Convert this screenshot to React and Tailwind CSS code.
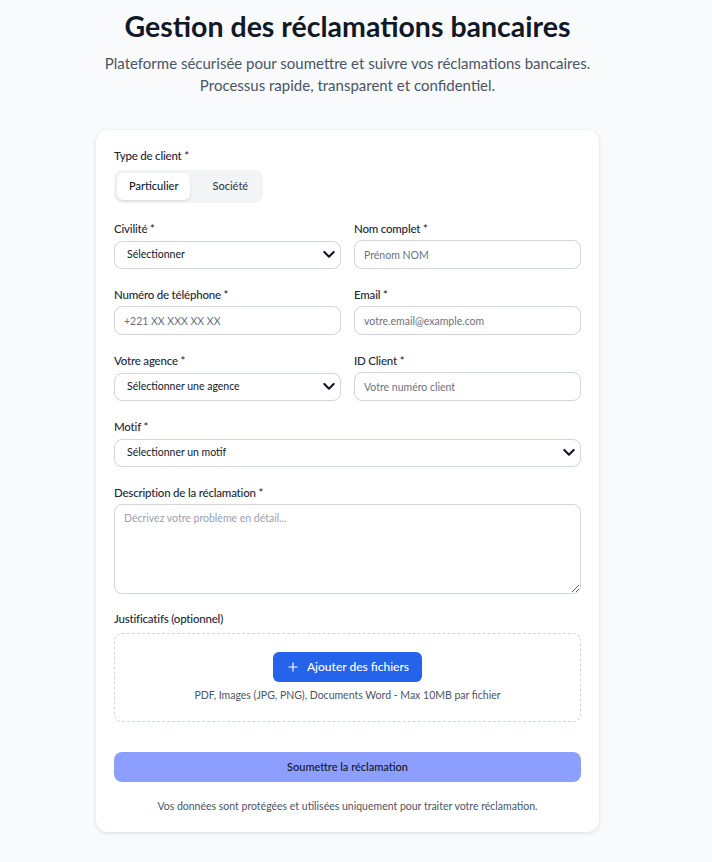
import React, { useState } from 'react';

const Chevron = () => (
  <svg
    className="pointer-events-none absolute right-[4px] top-1/2 -translate-y-1/2"
    width="16"
    height="16"
    viewBox="0 0 24 24"
    fill="none"
    stroke="#111827"
    strokeWidth="3.2"
    strokeLinecap="round"
    strokeLinejoin="round"
  >
    <path d="M5 9l7 7 7-7" />
  </svg>
);

const Label = ({ children, className = 'mb-[3px]' }) => (
  <label className={`block text-[11.5px] font-medium leading-[16px] tracking-[-0.2px] text-gray-800 ${className}`}>{children}</label>
);

const inputCls =
  'h-[29px] w-full rounded-lg border border-gray-300 bg-white px-[9px] text-[10.5px] text-gray-800 placeholder:text-gray-500 outline-none';

const Select = ({ children }) => (
  <div className="relative">
    <select className="h-[28px] w-full appearance-none rounded-lg border border-gray-300 bg-white pl-[12px] pr-8 text-[10.5px] text-gray-900 outline-none">
      <option>{children}</option>
    </select>
    <Chevron />
  </div>
);

export default function App() {
  const [type, setType] = useState('particulier');
  return (
    <div className="min-h-screen bg-[#f9fafb] font-['Lato',sans-serif] text-gray-900">
      <div className="w-[695px] pb-8">
        <div className="pt-[6px] text-center">
          <h1 className="text-[28.5px] font-bold leading-[40px] text-[#111827]">Gestion des réclamations bancaires</h1>
          <p className="mx-auto mt-[6px] max-w-[520px] text-[15px] leading-[22px] text-gray-600">
            Plateforme sécurisée pour soumettre et suivre vos réclamations bancaires. Processus rapide, transparent et confidentiel.
          </p>
        </div>

        <div className="mx-auto mt-[34px] w-[503px] rounded-xl bg-white px-[18px] pb-[17px] pt-[18px] shadow-[0_1px_4px_rgba(0,0,0,0.12)]">
          <Label className="mb-[6px]">Type de client *</Label>
          <div className="inline-flex gap-[10px] rounded-lg bg-gray-100 p-[3px]">
            <button
              onClick={() => setType('particulier')}
              className={`h-[27px] rounded-md px-[12px] text-[11px] font-medium ${type === 'particulier' ? 'bg-white text-gray-900 shadow-sm' : 'text-gray-700'}`}
            >
              Particulier
            </button>
            <button
              onClick={() => setType('societe')}
              className={`h-[27px] rounded-md px-[12px] text-[11px] font-medium ${type === 'societe' ? 'bg-white text-gray-900 shadow-sm' : 'text-gray-700'}`}
            >
              Société
            </button>
          </div>

          <div className="mt-[18px] grid grid-cols-2 gap-x-[13px] gap-y-[18px]">
            <div>
              <Label>Civilité *</Label>
              <Select>Sélectionner</Select>
            </div>
            <div>
              <Label>Nom complet *</Label>
              <input className={inputCls} placeholder="Prénom NOM" />
            </div>
            <div>
              <Label>Numéro de téléphone *</Label>
              <input className={inputCls} placeholder="+221 XX XXX XX XX" />
            </div>
            <div>
              <Label>Email *</Label>
              <input className={inputCls} placeholder="votre.email@example.com" />
            </div>
            <div>
              <Label>Votre agence *</Label>
              <Select>Sélectionner une agence</Select>
            </div>
            <div>
              <Label>ID Client *</Label>
              <input className={inputCls} placeholder="Votre numéro client" />
            </div>
            <div className="col-span-2">
              <Label>Motif *</Label>
              <Select>Sélectionner un motif</Select>
            </div>
            <div className="col-span-2">
              <Label>Description de la réclamation *</Label>
              <textarea
                className="block h-[90px] w-full rounded-lg border border-gray-300 bg-white px-[9px] py-[6px] text-[10.5px] text-gray-800 placeholder:text-gray-400 outline-none"
                placeholder="Décrivez votre problème en détail..."
              />
            </div>
            <div className="col-span-2 -mt-[1px]">
              <Label className="mb-[6px]">Justificatifs (optionnel)</Label>
              <div className="flex h-[89px] flex-col items-center justify-center rounded-lg border border-dashed border-gray-300">
                <button className="flex h-[30px] items-center gap-[7px] rounded-md bg-[#2563eb] px-[13px] text-[12px] font-medium text-white">
                  <svg width="14" height="14" viewBox="0 0 24 24" fill="none" stroke="currentColor" strokeWidth="2" strokeLinecap="round">
                    <path d="M12 5v14M5 12h14" />
                  </svg>
                  Ajouter des fichiers
                </button>
                <p className="mt-[6px] text-[10.5px] text-gray-600">PDF, Images (JPG, PNG), Documents Word - Max 10MB par fichier</p>
              </div>
            </div>
          </div>

          <button className="mt-[30px] h-[30px] w-full rounded-lg bg-[#8c9efe] text-[11px] font-medium text-gray-900">
            Soumettre la réclamation
          </button>
          <p className="mt-[17px] text-center text-[10.5px] text-gray-600">
            Vos données sont protégées et utilisées uniquement pour traiter votre réclamation.
          </p>
        </div>
      </div>
    </div>
  );
}
